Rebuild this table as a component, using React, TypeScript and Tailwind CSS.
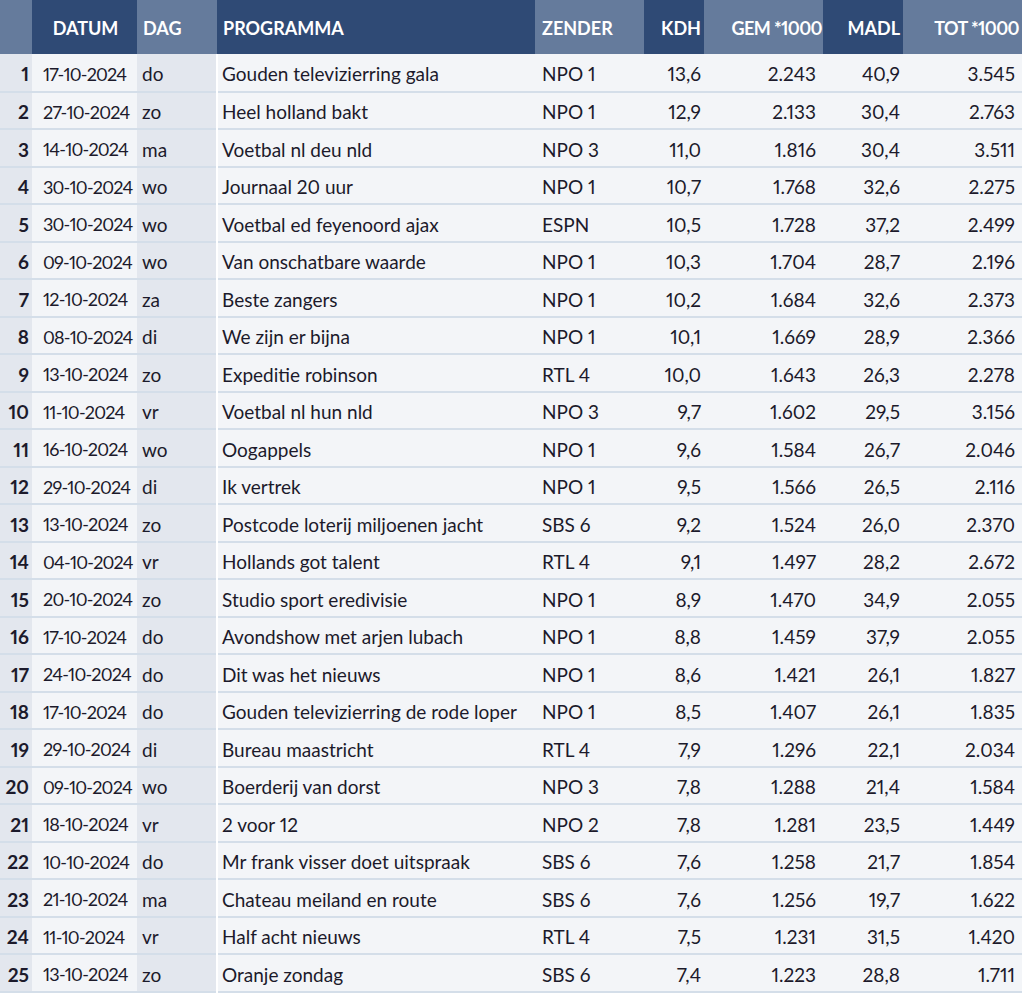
type Row = [string, string, string, string, string, string, string, string];

const rows: Row[] = [
  ['17-10-2024', 'do', 'Gouden televizierring gala', 'NPO 1', '13,6', '2.243', '40,9', '3.545'],
  ['27-10-2024', 'zo', 'Heel holland bakt', 'NPO 1', '12,9', '2.133', '30,4', '2.763'],
  ['14-10-2024', 'ma', 'Voetbal nl deu nld', 'NPO 3', '11,0', '1.816', '30,4', '3.511'],
  ['30-10-2024', 'wo', 'Journaal 20 uur', 'NPO 1', '10,7', '1.768', '32,6', '2.275'],
  ['30-10-2024', 'wo', 'Voetbal ed feyenoord ajax', 'ESPN', '10,5', '1.728', '37,2', '2.499'],
  ['09-10-2024', 'wo', 'Van onschatbare waarde', 'NPO 1', '10,3', '1.704', '28,7', '2.196'],
  ['12-10-2024', 'za', 'Beste zangers', 'NPO 1', '10,2', '1.684', '32,6', '2.373'],
  ['08-10-2024', 'di', 'We zijn er bijna', 'NPO 1', '10,1', '1.669', '28,9', '2.366'],
  ['13-10-2024', 'zo', 'Expeditie robinson', 'RTL 4', '10,0', '1.643', '26,3', '2.278'],
  ['11-10-2024', 'vr', 'Voetbal nl hun nld', 'NPO 3', '9,7', '1.602', '29,5', '3.156'],
  ['16-10-2024', 'wo', 'Oogappels', 'NPO 1', '9,6', '1.584', '26,7', '2.046'],
  ['29-10-2024', 'di', 'Ik vertrek', 'NPO 1', '9,5', '1.566', '26,5', '2.116'],
  ['13-10-2024', 'zo', 'Postcode loterij miljoenen jacht', 'SBS 6', '9,2', '1.524', '26,0', '2.370'],
  ['04-10-2024', 'vr', 'Hollands got talent', 'RTL 4', '9,1', '1.497', '28,2', '2.672'],
  ['20-10-2024', 'zo', 'Studio sport eredivisie', 'NPO 1', '8,9', '1.470', '34,9', '2.055'],
  ['17-10-2024', 'do', 'Avondshow met arjen lubach', 'NPO 1', '8,8', '1.459', '37,9', '2.055'],
  ['24-10-2024', 'do', 'Dit was het nieuws', 'NPO 1', '8,6', '1.421', '26,1', '1.827'],
  ['17-10-2024', 'do', 'Gouden televizierring de rode loper', 'NPO 1', '8,5', '1.407', '26,1', '1.835'],
  ['29-10-2024', 'di', 'Bureau maastricht', 'RTL 4', '7,9', '1.296', '22,1', '2.034'],
  ['09-10-2024', 'wo', 'Boerderij van dorst', 'NPO 3', '7,8', '1.288', '21,4', '1.584'],
  ['18-10-2024', 'vr', '2 voor 12', 'NPO 2', '7,8', '1.281', '23,5', '1.449'],
  ['10-10-2024', 'do', 'Mr frank visser doet uitspraak', 'SBS 6', '7,6', '1.258', '21,7', '1.854'],
  ['21-10-2024', 'ma', 'Chateau meiland en route', 'SBS 6', '7,6', '1.256', '19,7', '1.622'],
  ['11-10-2024', 'vr', 'Half acht nieuws', 'RTL 4', '7,5', '1.231', '31,5', '1.420'],
  ['13-10-2024', 'zo', 'Oranje zondag', 'SBS 6', '7,4', '1.223', '28,8', '1.711'],
];

const dark = 'bg-[#2f4a75]';
const light = 'bg-[#657b9c]';

export default function App() {
  return (
    <div className="w-[1024px] bg-white font-['Lato',sans-serif] text-[#1c1a2b]">
      <table className="w-[1022px] table-fixed border-collapse whitespace-nowrap text-[19px] proportional-nums">
        <colgroup>
          <col className="w-[32px]" />
          <col className="w-[105px]" />
          <col className="w-[80px]" />
          <col className="w-[318px]" />
          <col className="w-[109px]" />
          <col className="w-[60px]" />
          <col className="w-[119px]" />
          <col className="w-[80px]" />
          <col className="w-[119px]" />
        </colgroup>
        <thead>
          <tr className="h-[54px] text-[18px] font-extrabold uppercase text-white">
            <th className={`${light}`}></th>
            <th className={`${dark} pl-[2px] pt-[3px] text-center`}>Datum</th>
            <th className={`${light} pl-[6px] pt-[3px] text-left`}>Dag</th>
            <th className={`${dark} pl-[6px] pt-[3px] text-left`}>Programma</th>
            <th className={`${light} pl-[7px] pt-[3px] text-left`}>Zender</th>
            <th className={`${dark} pr-[3px] pt-[3px] text-right`}>KDH</th>
            <th className={`${light} pr-[1px] pt-[3px] text-right tracking-[-0.6px]`}>GEM *1000</th>
            <th className={`${dark} pr-[3px] pt-[3px] text-right`}>MADL</th>
            <th className={`${light} pr-[3px] pt-[3px] text-right tracking-[-0.6px]`}>TOT *1000</th>
          </tr>
        </thead>
        <tbody>
          {rows.map((r, i) => (
            <tr key={i} className="h-[37.5px] border-b-[2.5px] border-[#d4dee9] bg-[#f3f5f8] [&>td]:pt-[4px]">
              <td className="bg-[#e3e7ee] pr-[3px] text-right font-bold">{i + 1}</td>
              <td className="pl-[11px] text-[18px] tracking-[-0.8px]">{r[0]}</td>
              <td className="bg-[#e3e7ee] pl-[5px]">{r[1]}</td>
              <td className="border-l-2 border-white pl-[4px]">{r[2]}</td>
              <td className="pl-[7px]">{r[3]}</td>
              <td className="pr-[3px] text-right">{r[4]}</td>
              <td className="pr-[7px] text-right">{r[5]}</td>
              <td className="pr-[3px] text-right">{r[6]}</td>
              <td className="pr-[7px] text-right">{r[7]}</td>
            </tr>
          ))}
        </tbody>
      </table>
    </div>
  );
}
